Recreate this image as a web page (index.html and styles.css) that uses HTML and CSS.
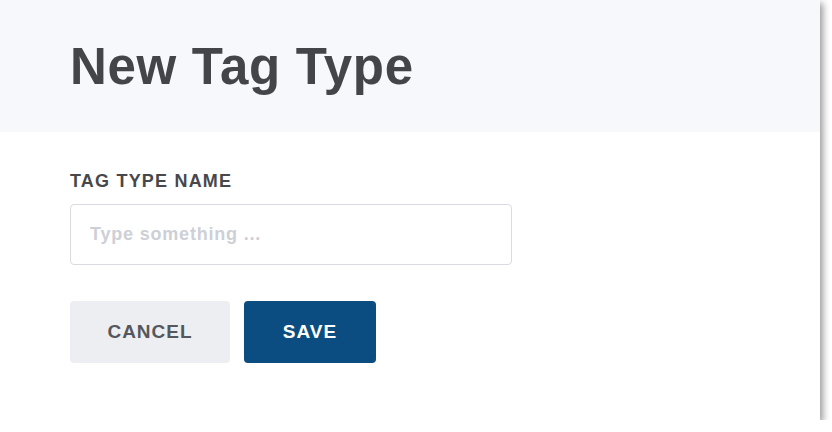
FILE: index.html
```html
<!DOCTYPE html>
<html lang="en">
<head>
    <meta charset="UTF-8">
    <title>New Tag Type</title>
    <link rel="stylesheet" href="styles.css">
</head>
<body>
<div class="panel">
    <div class="panelHead">
        <h1>New Tag Type</h1>
    </div>
    <div class="panelBody">
        <label class="fieldLabel" for="tagTypeName">TAG TYPE NAME</label>
        <input id="tagTypeName" class="textInput" placeholder="Type something ...">
        <div class="actions">
            <button class="btn btnCancel">CANCEL</button>
            <button class="btn btnSave">SAVE</button>
        </div>
    </div>
</div>
</body>
</html>
```

FILE: styles.css
```css
body {
    margin: 0;
    background: #fff;
    font-family: "Liberation Sans", Arial, sans-serif;
}

.panel {
    width: 820px;
    height: 420px;
    background: #fff;
    box-shadow: 3px 3px 7px rgba(0, 0, 0, 0.4);
}

.panelHead {
    height: 132px;
    background: #f6f8fc;
    display: flex;
    align-items: center;
    padding-left: 70px;
}

.panelHead h1 {
    margin: 0;
    font-size: 51px;
    font-weight: 700;
    letter-spacing: 0.7px;
    color: #444549;
}

.panelBody {
    padding: 39px 70px 0;
    display: flex;
    flex-direction: column;
    align-items: flex-start;
}

.fieldLabel {
    font-size: 18px;
    font-weight: 700;
    letter-spacing: 1.2px;
    color: #47484c;
    margin-bottom: 12px;
}

.textInput {
    box-sizing: border-box;
    width: 442px;
    height: 61px;
    border: 1px solid #d9dbe0;
    border-radius: 4px;
    padding: 0 19px;
    font-family: inherit;
    font-size: 18px;
    font-weight: 700;
    letter-spacing: 0.8px;
    color: #444;
    outline: none;
}

.textInput::placeholder {
    color: #cdd0d6;
}

.actions {
    display: flex;
    gap: 14px;
    margin-top: 36px;
}

.btn {
    height: 62px;
    border: none;
    border-radius: 4px;
    font-family: inherit;
    font-size: 19px;
    font-weight: 700;
    letter-spacing: 1px;
}

.btnCancel {
    width: 160px;
    background: #eceef2;
    color: #55575c;
}

.btnSave {
    width: 132px;
    background: #0b4d80;
    color: #fff;
}
```
